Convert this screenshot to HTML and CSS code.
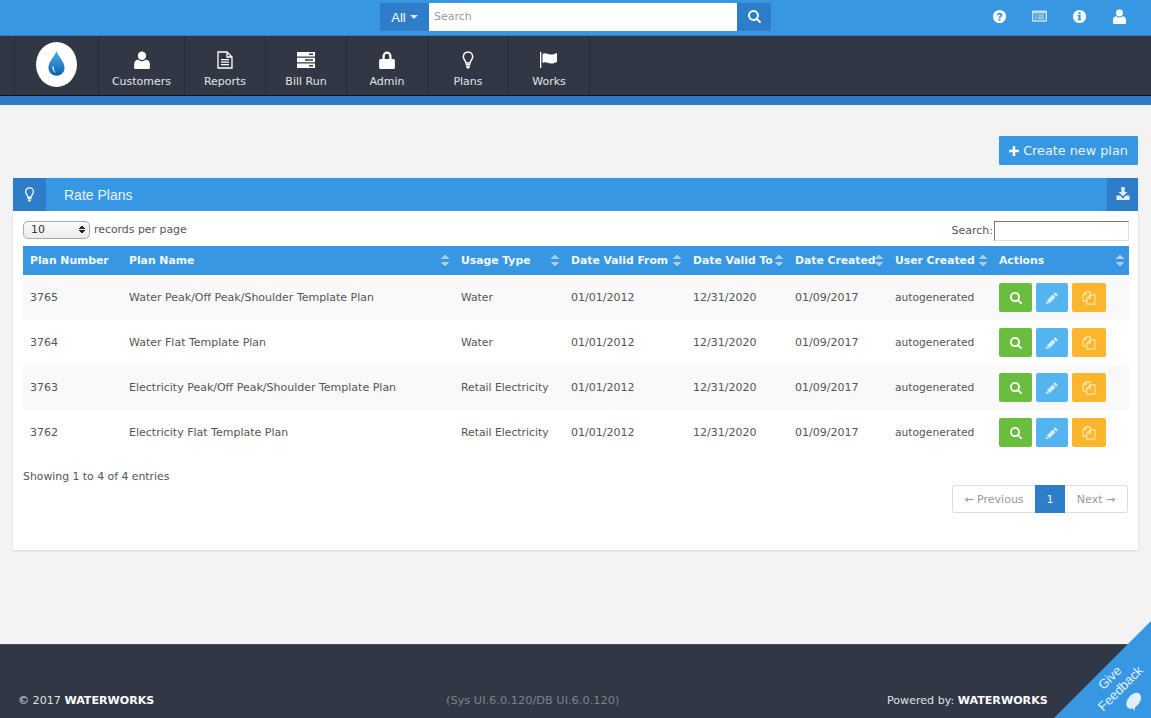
FILE: index.html
```html
<!DOCTYPE html>
<html lang="en">
<head>
<meta charset="utf-8">
<title>Rate Plans</title>
<link rel="stylesheet" href="styles.css">
</head>
<body>
<svg class="defs" width="0" height="0" aria-hidden="true">
  <defs>
    <symbol id="i-user" viewBox="0 0 16 16"><circle cx="8" cy="4.2" r="3.7"/><path d="M1 15v-3.2C1 9.2 2.8 7.8 4.6 7.6 5.5 8.5 6.7 9 8 9s2.500-.5 3.400-1.400C13.200 7.800 15 9.200 15 11.800V15c0 .6-.5 1-1 1H2c-.5 0-1-.4-1-1z"/></symbol>
    <symbol id="i-search" viewBox="0 0 16 16"><path fill-rule="evenodd" d="M6.700 0a6.700 6.700 0 0 1 5.400 10.600l3.500 3.500a1.200 1.200 0 0 1-1.700 1.700l-3.500-3.500A6.700 6.700 0 1 1 6.700 0zm0 2.400a4.300 4.300 0 1 0 0 8.600 4.300 4.300 0 0 0 0-8.600z"/></symbol>
    <symbol id="i-bulb" viewBox="0 0 12 18"><path fill="none" stroke="currentColor" stroke-width="1.500" d="M6 1a4.700 4.700 0 0 0-4.700 4.700c0 2.600 2.200 3.600 2.600 6.300h4.200c.4-2.700 2.600-3.700 2.600-6.300A4.700 4.700 0 0 0 6 1z"/><path d="M3.700 13h4.600v1.500H3.700zM4 15h4l-.8 2.500H4.800z"/></symbol>
    <symbol id="i-pencil" viewBox="0 0 14 14"><path d="M10 .8a1 1 0 0 1 1.400 0l1.800 1.800a1 1 0 0 1 0 1.400l-1.300 1.300-3.200-3.200zM7.900 3l3.200 3.200-6.900 6.900-3.200-3.200zM.4 10.700l3 3L0 14z"/></symbol>
    <symbol id="i-copy" viewBox="0 0 16 16"><path fill="none" stroke="currentColor" stroke-width="1.300" d="M5.500 11.500H1.200V4.300L4.500 1h4.800v3.500M4.500 1v3.300H1.200M5.500 8.500L9.500 4.500h5.300v10.500H5.500zM9.500 4.500v4h-4"/></symbol>
  </defs>
</svg>

<header class="topbar">
  <div class="topsearch">
    <button class="all-btn" type="button">All <span class="caret"></span></button>
    <input class="top-input" type="text" placeholder="Search">
    <button class="go-btn" type="button"><svg class="ico-go"><use href="#i-search"/></svg></button>
  </div>
  <div class="top-icons">
    <svg class="top-ico" viewBox="0 0 16 16"><path fill-rule="evenodd" d="M8 1a7 7 0 1 1 0 14A7 7 0 0 1 8 1zM7 10.500v2h2v-2zM5.200 6.300l1.600.6c.2-.6.600-1 1.200-1 .6 0 1 .3 1 .8 0 .9-2 1.100-2 3h2c0-1.200 2.100-1.500 2.100-3.300C11.100 4.800 9.700 4 8 4 6.600 4 5.600 4.900 5.200 6.300z"/></svg>
    <svg class="top-ico wide" viewBox="0 0 16 12"><path class="soft" fill-rule="evenodd" d="M1 0h14a1 1 0 0 1 1 1v10a1 1 0 0 1-1 1H1a1 1 0 0 1-1-1V1a1 1 0 0 1 1-1zm.500 3v7.500h13V3zM3 4.500h2v1H3zm3 0h7v1H6zM3 6.500h2v1H3zm3 0h7v1H6zM3 8.500h2v1H3zm3 0h7v1H6z"/></svg>
    <svg class="top-ico" viewBox="0 0 16 16"><path fill-rule="evenodd" d="M8 1a7 7 0 1 1 0 14A7 7 0 0 1 8 1zM6.800 3.500v2h2.400v-2zM6 6.500v1.300h.8v3H6V12h4v-1.200h-.8V6.500z"/></svg>
    <svg class="top-ico" viewBox="0 0 16 16"><use href="#i-user"/></svg>
  </div>
</header>

<nav class="mainnav">
  <div class="logo-cell">
    <div class="logo">
      <svg class="drop" viewBox="0 0 20 30">
        <defs><linearGradient id="dropfill" x1="0" y1="0" x2="0" y2="1"><stop offset="0" stop-color="#4db0ee"/><stop offset="1" stop-color="#0d5fae"/></linearGradient></defs>
        <path fill="url(#dropfill)" d="M10 0c1.500 6 9.500 12.500 9.500 20a9.500 9.500 0 0 1-19 0C.5 12.500 8.500 6 10 0z"/>
        <path fill="#bfe4fb" d="M5 19c0 4 2 6.500 4.500 7-2-1.500-2.500-4-2.500-7-.5-1-1.500-1-2 0z"/>
      </svg>
    </div>
  </div>
  <a class="nav-item first">
    <svg class="nav-ico" viewBox="0 0 16 16"><use href="#i-user"/></svg>
    <span>Customers</span>
  </a>
  <a class="nav-item">
    <svg class="nav-ico" viewBox="0 0 16 18"><path fill="none" stroke="currentColor" stroke-width="1.300" d="M1 1h9l5 5v11H1zM10 1v5h5"/><path d="M4 8h8v1.200H4zM4 10.500h8v1.200H4zM4 13h8v1.200H4z"/></svg>
    <span>Reports</span>
  </a>
  <a class="nav-item">
    <svg class="nav-ico" viewBox="0 0 18 16"><path fill-rule="evenodd" d="M0 0h18v4.500H0zM12 1.500v1.500h4V1.500zM0 5.700h18v4.500H0zM8 7.200v1.500h8V7.200zM0 11.500h18V16H0zM12 13v1.500h4V13z"/></svg>
    <span>Bill Run</span>
  </a>
  <a class="nav-item">
    <svg class="nav-ico" viewBox="0 0 14 16"><path fill-rule="evenodd" d="M3 7V4.500a4 4 0 0 1 8 0V7h1.500c.8 0 1.500.6 1.500 1.400v6.200c0 .8-.7 1.400-1.500 1.400h-11C.7 16 0 15.400 0 14.600V8.400C0 7.600.7 7 1.500 7zm2 0h4V4.500a2 2 0 0 0-4 0z"/></svg>
    <span>Admin</span>
  </a>
  <a class="nav-item">
    <svg class="nav-ico" viewBox="0 0 12 18"><use href="#i-bulb"/></svg>
    <span>Plans</span>
  </a>
  <a class="nav-item">
    <svg class="nav-ico flag" viewBox="0 0 18 16"><path d="M0 0h1.300v16H0z"/><path d="M2.500 2C6 0 8 2.500 11 2.500c2.500 0 4-.7 6-1.500v9c-2 .8-3.500 1.500-6 1.500-3 0-5-2.500-8.500-.5z"/></svg>
    <span>Works</span>
  </a>
</nav>
<div class="nav-strip"></div>

<main class="content">
  <div class="actions-row">
    <button class="create-btn" type="button"><svg class="plus" viewBox="0 0 12 12"><path d="M4.500 0h3v4.500H12v3H7.500V12h-3V7.500H0v-3h4.500z"/></svg> Create new plan</button>
  </div>

  <section class="panel">
    <div class="panel-head">
      <div class="panel-icon"><svg class="ico-bulb" viewBox="0 0 12 18"><use href="#i-bulb"/></svg></div>
      <h2 class="panel-title">Rate Plans</h2>
      <div class="panel-dl">
        <svg class="ico-dl" viewBox="0 0 16 16"><path d="M6 0h4v6h3.500L8 11.500 2.500 6H6z"/><path d="M0 10.500h4.500L8 14l3.500-3.500H16V16H0z"/></svg>
      </div>
    </div>
    <div class="panel-body">
      <div class="table-tools">
        <label class="length"><span class="fake-select"><span>10</span><span class="updown"></span></span> records per page</label>
        <label class="filter">Search:<input class="filter-input" type="text"></label>
      </div>
      <table class="plans">
        <colgroup>
          <col class="c1"><col class="c2"><col class="c3"><col class="c4"><col class="c5"><col class="c6"><col class="c7"><col class="c8">
        </colgroup>
        <thead>
          <tr>
            <th>Plan Number</th>
            <th class="sort">Plan Name</th>
            <th class="sort">Usage Type</th>
            <th class="sort">Date Valid From</th>
            <th class="sort">Date Valid To</th>
            <th class="sort">Date Created</th>
            <th class="sort">User Created</th>
            <th class="sort">Actions</th>
          </tr>
        </thead>
        <tbody>
          <tr>
            <td>3765</td><td>Water Peak/Off Peak/Shoulder Template Plan</td><td>Water</td><td>01/01/2012</td><td>12/31/2020</td><td>01/09/2017</td><td>autogenerated</td>
            <td><div class="acts"><button class="act green" type="button"><svg class="ico-13"><use href="#i-search"/></svg></button><button class="act sky" type="button"><svg class="ico-13"><use href="#i-pencil"/></svg></button><button class="act amber" type="button"><svg class="ico-copy"><use href="#i-copy"/></svg></button></div></td>
          </tr>
          <tr>
            <td>3764</td><td>Water Flat Template Plan</td><td>Water</td><td>01/01/2012</td><td>12/31/2020</td><td>01/09/2017</td><td>autogenerated</td>
            <td><div class="acts"><button class="act green" type="button"><svg class="ico-13"><use href="#i-search"/></svg></button><button class="act sky" type="button"><svg class="ico-13"><use href="#i-pencil"/></svg></button><button class="act amber" type="button"><svg class="ico-copy"><use href="#i-copy"/></svg></button></div></td>
          </tr>
          <tr>
            <td>3763</td><td>Electricity Peak/Off Peak/Shoulder Template Plan</td><td>Retail Electricity</td><td>01/01/2012</td><td>12/31/2020</td><td>01/09/2017</td><td>autogenerated</td>
            <td><div class="acts"><button class="act green" type="button"><svg class="ico-13"><use href="#i-search"/></svg></button><button class="act sky" type="button"><svg class="ico-13"><use href="#i-pencil"/></svg></button><button class="act amber" type="button"><svg class="ico-copy"><use href="#i-copy"/></svg></button></div></td>
          </tr>
          <tr>
            <td>3762</td><td>Electricity Flat Template Plan</td><td>Retail Electricity</td><td>01/01/2012</td><td>12/31/2020</td><td>01/09/2017</td><td>autogenerated</td>
            <td><div class="acts"><button class="act green" type="button"><svg class="ico-13"><use href="#i-search"/></svg></button><button class="act sky" type="button"><svg class="ico-13"><use href="#i-pencil"/></svg></button><button class="act amber" type="button"><svg class="ico-copy"><use href="#i-copy"/></svg></button></div></td>
          </tr>
        </tbody>
      </table>
      <p class="info">Showing 1 to 4 of 4 entries</p>
      <div class="pager-row">
        <div class="pager">
          <a class="pg prev">← Previous</a><a class="pg current">1</a><a class="pg next">Next →</a>
        </div>
      </div>
    </div>
  </section>
</main>

<footer class="footer">
  <div class="copy">© 2017 <b>WATERWORKS</b></div>
  <div class="ver">(Sys UI.6.0.120/DB UI.6.0.120)</div>
  <div class="powered">Powered by: <b>WATERWORKS</b></div>
</footer>

<aside class="feedback">
  <svg class="fb-tri" viewBox="0 0 97 97"><path d="M97 0V97H0z"/></svg>
  <span class="fb-text">Give<br>Feedback</span>
  <svg class="fb-bubble" viewBox="0 0 24 16"><ellipse cx="12" cy="7.500" rx="11" ry="7"/><path d="M5 11l-2 5 6-3z"/></svg>
</aside>
</body>
</html>
```
FILE: styles.css
```css
* { box-sizing: border-box; }
html, body { margin: 0; padding: 0; }
body {
  width: 1151px;
  height: 718px;
  overflow: hidden;
  position: relative;
  display: flex;
  flex-direction: column;
  background: #f3f3f4;
  font-family: "DejaVu Sans", sans-serif;
  font-size: 11px;
  color: #555;
}
.defs { position: absolute; }
svg { fill: currentColor; display: block; }
button { font-family: inherit; border: 0; padding: 0; }

/* top bar */
.topbar {
  height: 36px;
  flex: none;
  background: #3797e3;
  border-bottom: 1px solid #2f7fc2;
  display: flex;
  position: relative;
  padding-left: 380px;
}
.topsearch { display: flex; height: 28px; margin-top: 3px; }
.all-btn {
  width: 49px;
  background: #2e7dc8;
  color: #fff;
  font-family: "Liberation Sans", sans-serif;
  display: flex;
  align-items: center;
  justify-content: center;
  gap: 4px;
  font-size: 13px;
}
.caret {
  border-top: 4px solid #dfeaf5;
  border-left: 4px solid transparent;
  border-right: 4px solid transparent;
}
.top-input {
  width: 308px;
  border: 0;
  background: #fff;
  padding: 0 5px 2px;
  font-family: inherit;
  font-size: 11px;
  outline: 0;
}
.top-input::placeholder { color: #9a9a9a; opacity: 1; }
.go-btn {
  width: 34px;
  background: #2e7dc8;
  color: #fff;
  display: flex;
  align-items: center;
  justify-content: center;
  padding-bottom: 2px;
}
.ico-go { width: 13px; height: 13px; }
.top-icons {
  margin-left: auto;
  display: flex;
  align-items: center;
  color: #fff;
  margin-right: 24px;
  margin-top: -3px;
  gap: 25px;
}
.top-ico { width: 15px; height: 15px; }
.top-ico.wide { width: 15px; height: 12px; color: #cfe6f8; }
.soft { opacity: .95; }

/* main nav */
.mainnav {
  height: 60px;
  flex: none;
  background: #313744;
  border-bottom: 1px solid #0c0f17;
  display: flex;
  padding-left: 14px;
  color: #e8eaee;
}
.logo-cell {
  width: 85px;
  border-left: 1px solid #262b36;
  border-right: 1px solid #262b36;
  display: flex;
  align-items: center;
  justify-content: center;
}
.logo {
  width: 41px;
  height: 45px;
  margin-top: -3px;
  border-radius: 50%;
  background: #fff;
  display: flex;
  align-items: center;
  justify-content: center;
}
.drop { width: 17px; height: 27px; margin-top: -2px; }
.nav-item {
  width: 81px;
  border-right: 1px solid #262b36;
  display: flex;
  flex-direction: column;
  align-items: center;
  padding-top: 15px;
  font-size: 11px;
  color: #e2e4e8;
}
.nav-item.first { width: 86px; }
.nav-item span { margin-top: auto; margin-bottom: 7px; line-height: 13px; }
.nav-ico { height: 18px; width: 18px; color: #fff; }
.nav-strip { height: 9px; flex: none; background: #2d7bc5; }

/* content */
.content {
  flex: 1;
  padding: 31px 13px 0;
  min-height: 0;
  background: #f3f3f4;
}
.actions-row { display: flex; justify-content: flex-end; height: 29px; }
.create-btn {
  width: 139px;
  height: 29px;
  background: #3797e3;
  color: #e9f4fc;
  font-size: 12.8px;
  border-radius: 1px;
  display: flex;
  align-items: center;
  justify-content: center;
  gap: 4px;
}
.plus { width: 10px; height: 10px; color: #fff; }

.panel {
  margin-top: 13px;
  background: #fff;
  box-shadow: 0 1px 2px rgba(0, 0, 0, .12);
  height: 372px;
}
.panel-head {
  height: 33px;
  background: #3797e3;
  display: flex;
  align-items: center;
  color: #fff;
}
.panel-icon {
  width: 33px;
  height: 33px;
  background: #2e7dc8;
  display: flex;
  align-items: center;
  justify-content: center;
}
.ico-bulb { width: 11px; height: 15px; }
.panel-title {
  margin: 0 0 0 18px;
  font-family: "Liberation Sans", sans-serif;
  font-size: 14px;
  font-weight: 400;
  color: #e8f3fb;
}
.panel-dl {
  margin-left: auto;
  width: 31px;
  height: 33px;
  background: #2e7dc8;
  color: #e2f0fa;
  display: flex;
  align-items: center;
  justify-content: center;
  padding-bottom: 2px;
}
.ico-dl { width: 14px; height: 13px; }
.panel-body { padding: 0 9px 0 10px; }
.table-tools {
  height: 35px;
  display: flex;
  align-items: center;
  justify-content: space-between;
  padding-top: 2px;
}
.length { display: flex; align-items: center; gap: 4px; color: #555; font-size: 10.9px; }
.fake-select {
  width: 67px;
  height: 18px;
  border: 1px solid #aaa;
  border-radius: 5px;
  background: linear-gradient(#fafafa, #ececec);
  display: flex;
  align-items: center;
  justify-content: space-between;
  padding: 0 4px 0 7px;
  color: #333;
}
.updown {
  width: 6px;
  height: 9px;
  background:
    linear-gradient(to top left, #222 50%, transparent 51%) left top / 3px 4px no-repeat,
    linear-gradient(to top right, #222 50%, transparent 51%) right top / 3px 4px no-repeat,
    linear-gradient(to bottom left, #222 50%, transparent 51%) left bottom / 3px 4px no-repeat,
    linear-gradient(to bottom right, #222 50%, transparent 51%) right bottom / 3px 4px no-repeat;
}
.filter { display: flex; align-items: center; font-size: 11px; color: #555; padding-top: 2px; }
.filter-input {
  width: 135px;
  height: 20px;
  border: 1px solid #ddd;
  border-top-color: #777;
  border-left-color: #777;
  background: #fff;
  outline: 0;
  margin-left: 1px;
}

.plans {
  width: 1106px;
  table-layout: fixed;
  border-collapse: collapse;
}
.c1 { width: 99px; }
.c2 { width: 332px; }
.c3 { width: 110px; }
.c4 { width: 122px; }
.c5 { width: 102px; }
.c6 { width: 100px; }
.c7 { width: 104px; }
.c8 { width: 137px; }
.plans th {
  height: 29px;
  background: #3797e3;
  color: #f2f8fd;
  font-weight: 700;
  font-size: 10.8px;
  text-align: left;
  padding: 0 7px;
  white-space: nowrap;
  position: relative;
}
.plans th.sort::after {
  content: "";
  position: absolute;
  right: 5px;
  top: 8px;
  width: 8px;
  height: 13px;
  background:
    linear-gradient(to top left, #a9cdee 50%, transparent 51%) left top / 4px 5px no-repeat,
    linear-gradient(to top right, #a9cdee 50%, transparent 51%) right top / 4px 5px no-repeat,
    linear-gradient(to bottom left, #a9cdee 50%, transparent 51%) left bottom / 4px 5px no-repeat,
    linear-gradient(to bottom right, #a9cdee 50%, transparent 51%) right bottom / 4px 5px no-repeat;
}
.plans td {
  height: 45px;
  padding: 0 7px;
  font-size: 11px;
  color: #555;
  white-space: nowrap;
}
.plans td:nth-child(3) { font-size: 10.8px; }
.plans td:nth-child(7) { font-size: 10.7px; }
.plans tbody tr:nth-child(odd) td { background: #f9f9f9; }
.acts { display: flex; gap: 4px; }
.act {
  height: 29px;
  width: 33px;
  border-radius: 2px;
  color: #fff;
  display: flex;
  align-items: center;
  justify-content: center;
}
.green { background: #6bbd3f; }
.sky { background: #54b4f0; color: #d5ecfb; width: 32px; }
.amber { background: #fbb62c; color: #fde6ab; width: 34px; }
.ico-13 { width: 12px; height: 12px; }
.ico-copy { width: 14px; height: 14px; }

.info { margin: 15px 0 0; line-height: 13px; font-size: 10.85px; color: #555; }
.pager-row { display: flex; justify-content: flex-end; padding-right: 1px; margin-top: 2px; }
.pager {
  display: flex;
  height: 28px;
  border: 1px solid #ddd;
  border-radius: 3px;
  align-items: stretch;
}
.pg {
  display: flex;
  align-items: center;
  justify-content: center;
  color: #999;
  font-size: 11px;
}
.prev { width: 82px; }
.current { width: 30px; background: #2e7dc8; color: #e9f2fa; margin: -1px 0; }
.next { width: 62px; }

/* footer */
.footer {
  height: 74px;
  flex: none;
  background: #313744;
  border-top: 1px solid #4a4c50;
  display: flex;
  position: relative;
  color: #dfe1e4;
  font-size: 11.1px;
  padding: 49px 0 0 18px;
  line-height: 13px;
}
.footer b { color: #fff; }
.copy { width: 428px; }
.ver { color: #7d828c; width: 441px; font-size: 11.35px; }

/* give feedback corner */
.feedback {
  position: absolute;
  right: 0;
  bottom: 0;
  width: 97px;
  height: 97px;
}
.fb-tri { width: 97px; height: 97px; fill: #3797e3; }
.fb-text {
  position: absolute;
  left: 23px;
  top: 47px;
  width: 76px;
  font-family: "Liberation Sans", sans-serif;
  font-size: 13px;
  line-height: 15px;
  text-align: center;
  color: #e3f2fc;
  transform: rotate(-45deg);
}
.fb-bubble {
  position: absolute;
  right: 7px;
  bottom: 10px;
  width: 20px;
  height: 14px;
  fill: #dff0fb;
  transform: rotate(-50deg);
}
```
